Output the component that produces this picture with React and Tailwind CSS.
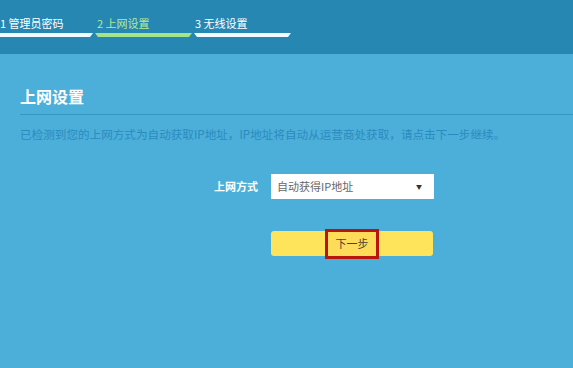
import React from "react";

const font = { fontFamily: '"Noto Sans CJK SC", "Noto Sans", sans-serif' };

function Step({ label, active, pl }) {
  return (
    <div className="flex w-[97px] flex-col">
      <div
        className={`${pl} text-[11px] leading-[14px] whitespace-nowrap ${
          active ? "text-[#b4ec97]" : "text-white"
        }`}
      >
        {label}
      </div>
      <div
        className={`mt-[3px] h-[4px] [clip-path:polygon(0_0,100%_0,calc(100%-3px)_100%,3px_100%)] ${
          active ? "bg-[#a6e48a]" : "bg-[#f2fbff]"
        }`}
      />
    </div>
  );
}

export default function App() {
  return (
    <div className="flex h-[368px] w-[573px] flex-col overflow-hidden bg-[#4bafda]" style={font}>
      <div className="h-[54px] shrink-0 bg-[#2687b2] pt-[16px]">
        <div className="ml-[-4px] flex gap-[2px]">
          <Step label="1 管理员密码" pl="pl-[4px]" />
          <Step label="2 上网设置" active pl="pl-[2px]" />
          <Step label="3 无线设置" pl="pl-[1px]" />
        </div>
      </div>

      <div className="flex flex-1 flex-col pl-[20px] pt-[32px]">
        <div className="text-[16px] font-bold leading-[20px] text-white">上网设置</div>
        <div className="mt-[8px] h-[1px] bg-[#3596c3]" />
        <div className="mt-[12px] text-[11.6px] leading-[14px] text-[#2b8bbd] whitespace-nowrap">
          已检测到您的上网方式为自动获取IP地址，IP地址将自动从运营商处获取，请点击下一步继续。
        </div>

        <div className="mt-[33px] flex items-center gap-[13px]">
          <div className="w-[238px] text-right text-[11px] font-bold text-white">上网方式</div>
          <div className="flex h-[25px] w-[163px] items-center justify-between bg-white pl-[6px] pr-[12px]">
            <span className="text-[11px] text-[#666]">自动获得IP地址</span>
            <span className="text-[6px] leading-none text-[#333]">▼</span>
          </div>
        </div>

        <div className="ml-[251px] mt-[32px] flex h-[25px] w-[162px] items-center justify-center rounded-[3px] bg-[#fde45b]">
          <span className="flex h-[30px] w-[54px] items-center justify-center border-[3px] border-[#b8150f] bg-[#fcdc58] text-[11px] text-[#4a4330]">
            下一步
          </span>
        </div>
      </div>
    </div>
  );
}
